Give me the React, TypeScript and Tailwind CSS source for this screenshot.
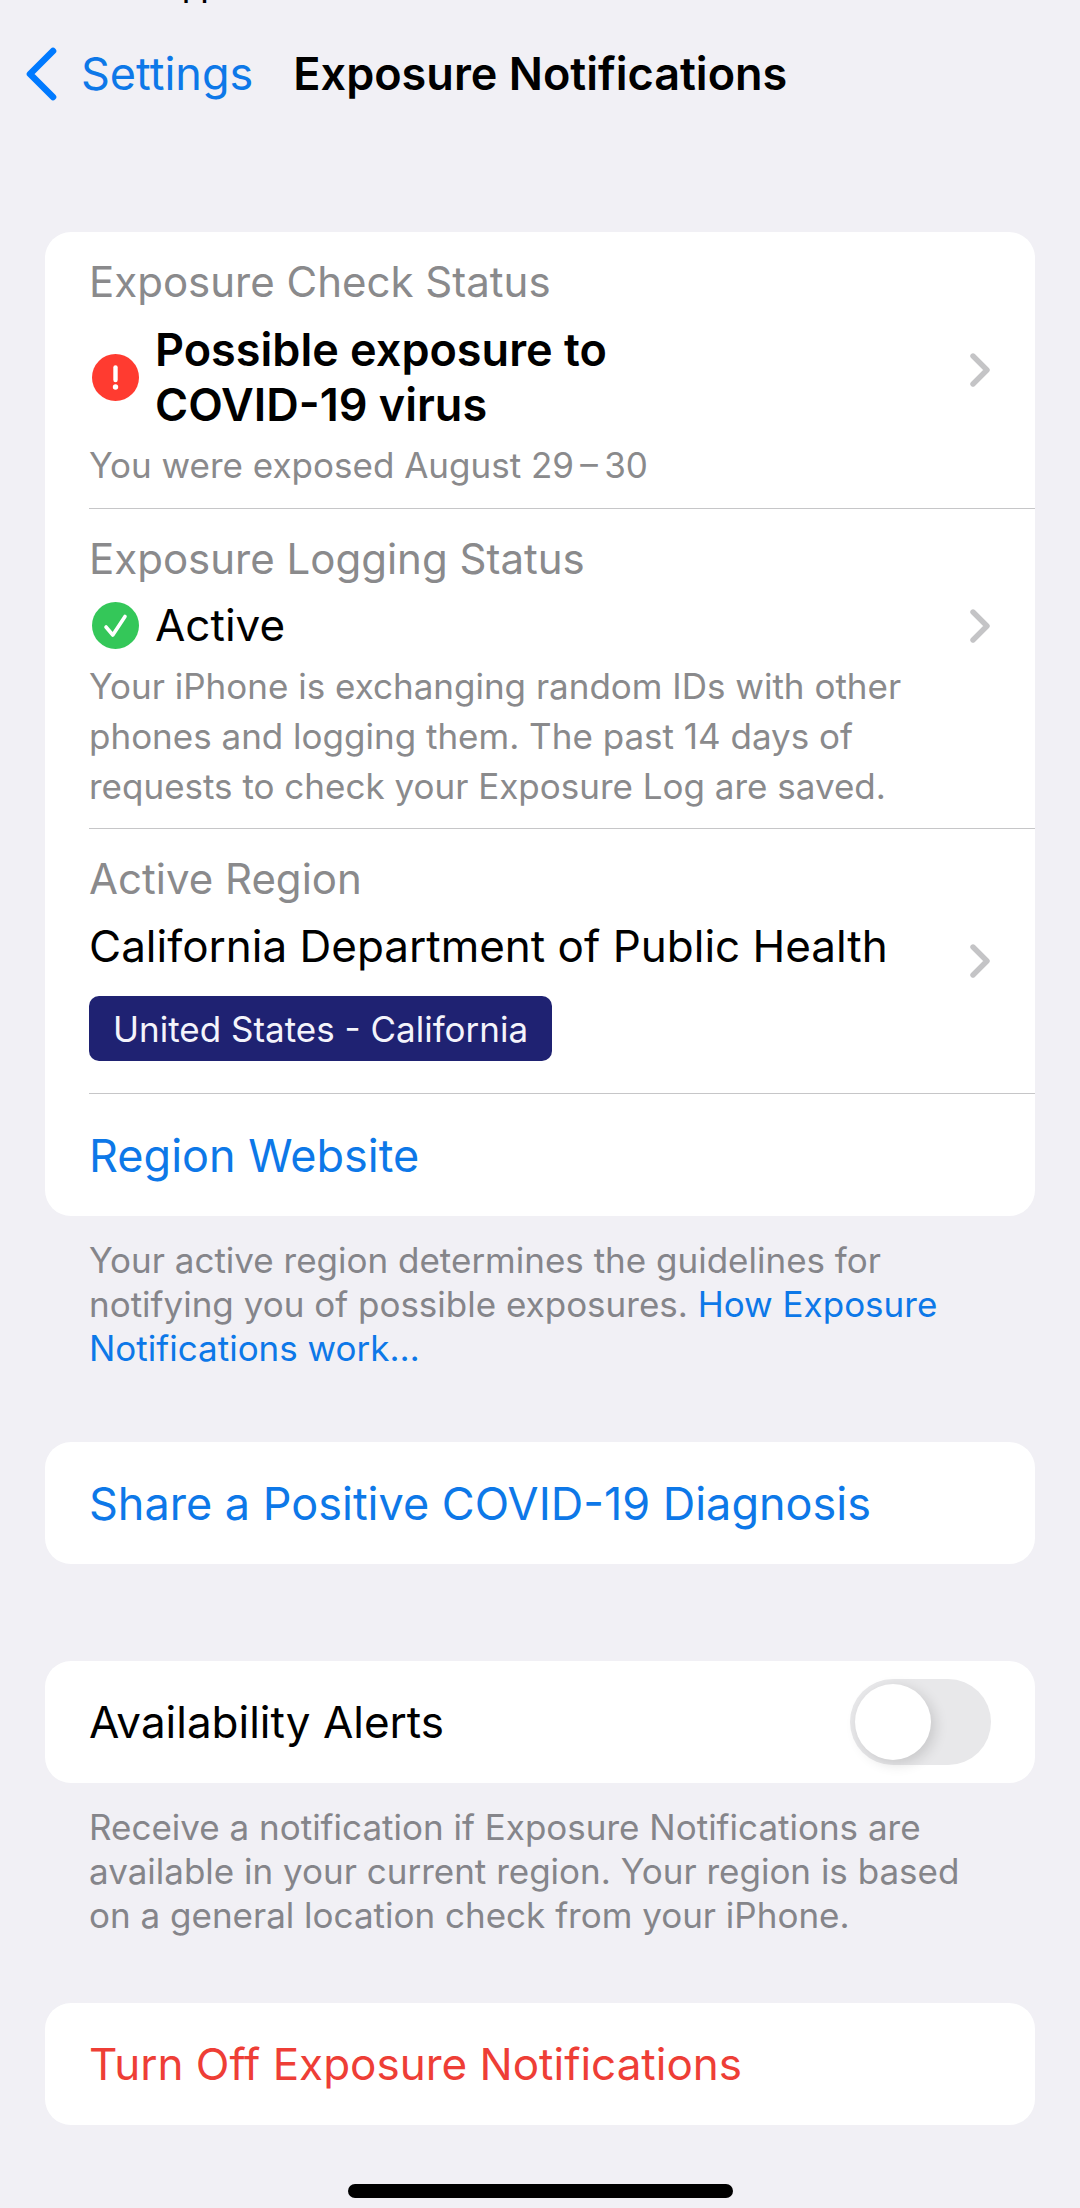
import React, { useState } from "react";

function ChevronRight() {
  return (
    <svg aria-hidden="true" viewBox="0 0 20 34" className="h-[34px] w-5 shrink-0" fill="none" stroke="#c4c4c6" strokeWidth="5.4" strokeLinecap="round" strokeLinejoin="round">
      <path d="M3 3l14 14L3 31" />
    </svg>
  );
}

function AlertIcon() {
  return (
    <svg aria-hidden="true" viewBox="0 0 47 47" className="size-[47px] shrink-0">
      <circle cx="23.5" cy="23.5" r="23.5" fill="#ff3b30" />
      <path d="M23.500 13.500v12.500" stroke="#fff" strokeWidth="4.400" strokeLinecap="round" />
      <circle cx="23.5" cy="33" r="2.7" fill="#fff" />
    </svg>
  );
}

function CheckIcon() {
  return (
    <svg aria-hidden="true" viewBox="0 0 47 47" className="size-[47px] shrink-0">
      <circle cx="23.5" cy="23.5" r="23.5" fill="#34c759" />
      <path d="M14 25l6.800 8L33 14.500" fill="none" stroke="#fff" strokeWidth="3.600" strokeLinecap="round" strokeLinejoin="round" />
    </svg>
  );
}

const label = "block text-[42px] leading-[52px] text-[#8a8a8c]";
const title = "block text-[44px] leading-[55px] text-black";
const detail = "mt-2 block text-[35px] leading-[50px] text-[#8a8a8c]";
const footer = "mx-11 mt-[22px] text-[35px] leading-[44px] text-[#85858a]";
const card = "rounded-[26px] bg-white pl-11";
const actionRow = "flex h-[122px] w-full items-center text-left leading-[55px]";

export default function App() {
  const [alerts, setAlerts] = useState(false);
  return (
    <div className="min-h-screen bg-[#f1f0f5] font-['Inter','Liberation_Sans',sans-serif]">
      <div className="h-[3px] overflow-hidden pl-[161px]">
        <a href="#app-store" className="-mt-8 block text-[30px] leading-[38px] font-medium text-black">App Store</a>
      </div>
      <header className="flex h-[141px] items-center pl-[26px]">
        <button type="button" className="flex items-center gap-6 text-[45px] leading-[55px] text-[#0d78e8]">
          <svg aria-hidden="true" viewBox="0 0 31 54" className="h-[54px] w-[31px]" fill="none" stroke="#007aff" strokeWidth="6.600" strokeLinecap="round" strokeLinejoin="round">
            <path d="M27 4L4 27l23 23" />
          </svg>
          Settings
        </button>
        <h1 className="ml-10 text-[45px] leading-[55px] font-semibold text-black">Exposure Notifications</h1>
      </header>

      <main className="px-[45px] pt-[88px]">
        <section className={card}>
          <button type="button" className="flex w-full items-center justify-between border-b border-[#c6c6c8] pr-[45px] text-left">
            <span className="pt-6 pb-[18px]">
              <span className={label}>Exposure Check Status</span>
              <span className="mt-[14px] flex items-center gap-4 pl-[3px]">
                <AlertIcon />
                <span className="text-[45px] leading-[55px] font-semibold text-black">
                  Possible exposure to
                  <br />
                  COVID-19 virus
                </span>
              </span>
              <span className={detail}>You were exposed August 29{"\u2009"}–{"\u2009"}30</span>
            </span>
            <ChevronRight />
          </button>

          <button type="button" className="block w-full border-b border-[#c6c6c8] pt-6 pr-[45px] pb-[17px] text-left">
            <span className={label}>Exposure Logging Status</span>
            <span className="mt-[13px] flex items-center gap-4 pl-[3px]">
              <CheckIcon />
              <span className="grow text-[44px] leading-[55px] text-black">Active</span>
              <ChevronRight />
            </span>
            <span className="block pr-12">
              <span className={detail}>
                Your iPhone is exchanging random IDs with other phones and logging them. The past 14 days of requests to check your Exposure Log are saved.
              </span>
            </span>
          </button>

          <button type="button" className="flex w-full items-center justify-between border-b border-[#c6c6c8] pr-[45px] text-left">
            <span className="pt-6 pb-8">
              <span className={label}>Active Region</span>
              <span className="mt-[14px] block text-[44px] leading-[55px] text-black">California Department of Public Health</span>
              <span className="mt-[22px] flex h-[65px] w-fit items-center rounded-[10px] bg-[#1f2272] px-6 text-[35px] leading-[50px] text-[#f4f4fb]">
                United States - California
              </span>
            </span>
            <ChevronRight />
          </button>

          <a href="#region-website" className={actionRow + " text-[45px] text-[#0d78e8]"}>Region Website</a>
        </section>
        <p className={footer}>
          Your active region determines the guidelines for notifying you of possible exposures.{" "}
          <a href="#how-it-works" className="text-[#0d78e8]">How Exposure Notifications work…</a>
        </p>

        <section className={card + " mt-[72px]"}>
          <button type="button" className={actionRow + " text-[45px] text-[#0d78e8]"}>Share a Positive COVID-19 Diagnosis</button>
        </section>

        <section className={card + " mt-[97px]"}>
          <label className="flex h-[122px] items-center justify-between pr-11">
            <span className={title}>Availability Alerts</span>
            <span className="relative flex shrink-0">
              <input
                type="checkbox"
                role="switch"
                checked={alerts}
                onChange={(e) => setAlerts(e.target.checked)}
                className="peer h-[86px] w-[141px] appearance-none rounded-full bg-[#e8e8ea] checked:bg-[#34c759]"
              />
              <span className="pointer-events-none absolute top-[5px] left-[5px] size-[76px] rounded-full bg-white shadow-[4px_4px_14px_rgba(0,0,0,0.14)] peer-checked:left-[60px]" />
            </span>
          </label>
        </section>
        <p className={footer}>
          Receive a notification if Exposure Notifications are available in your current region. Your region is based on a general location check from your iPhone.
        </p>

        <section className={card + " mt-[66px]"}>
          <button type="button" className={actionRow + " text-[44px] text-[#ee3e36]"}>Turn Off Exposure Notifications</button>
        </section>
      </main>
      <div className="mx-auto mt-[59px] h-[14px] w-[385px] rounded-full bg-black" />
    </div>
  );
}
